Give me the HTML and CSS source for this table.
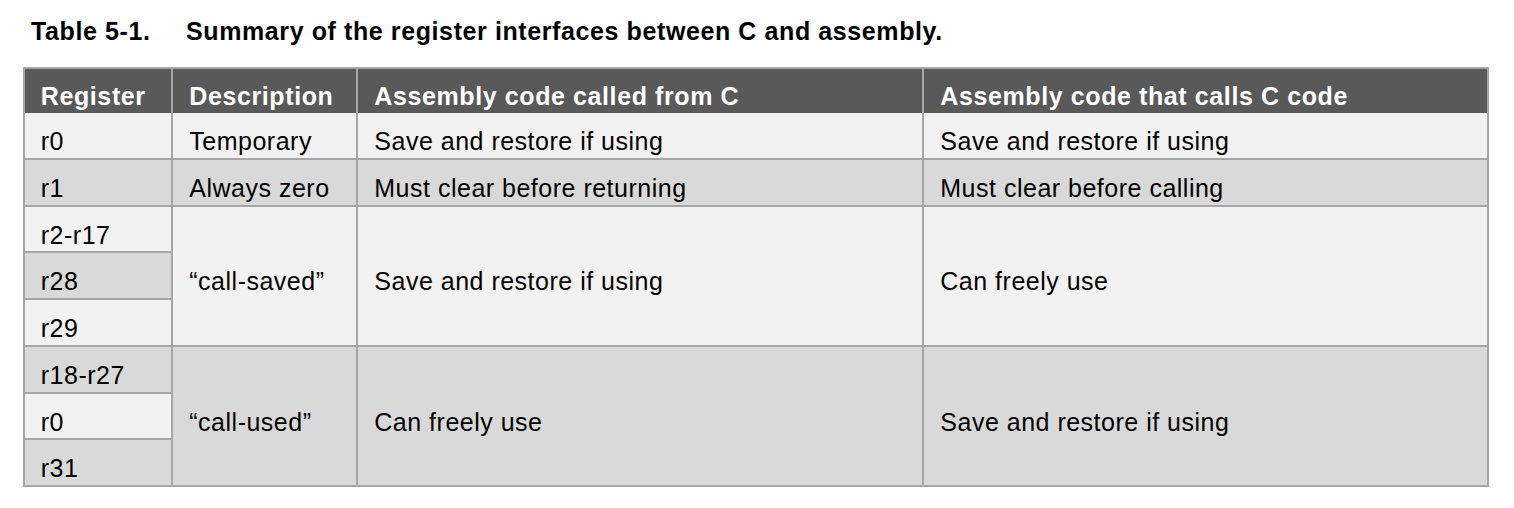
FILE: index.html
```html
<!DOCTYPE html>
<html lang="en">
<head>
<meta charset="utf-8">
<title>Table 5-1</title>
<link rel="stylesheet" href="styles.css">
</head>
<body>
<div class="page">
  <h1 class="caption"><span class="cap-num">Table 5-1.</span><span class="cap-text">Summary of the register interfaces between C and assembly.</span></h1>
  <div class="tbl" role="table">
    <div class="cell head">Register</div>
    <div class="cell head">Description</div>
    <div class="cell head">Assembly code called from C</div>
    <div class="cell head">Assembly code that calls C code</div>

    <div class="cell light">r0</div>
    <div class="cell light">Temporary</div>
    <div class="cell light">Save and restore if using</div>
    <div class="cell light">Save and restore if using</div>

    <div class="cell dark">r1</div>
    <div class="cell dark">Always zero</div>
    <div class="cell dark">Must clear before returning</div>
    <div class="cell dark">Must clear before calling</div>

    <div class="cell light c1 g1a">r2-r17</div>
    <div class="cell light span3 c2 g1">“call-saved”</div>
    <div class="cell light span3 c3 g1">Save and restore if using</div>
    <div class="cell light span3 c4 g1">Can freely use</div>
    <div class="cell dark c1 g1b">r28</div>
    <div class="cell light c1 g1c">r29</div>

    <div class="cell dark c1 g2a">r18-r27</div>
    <div class="cell dark span3 c2 g2">“call-used”</div>
    <div class="cell dark span3 c3 g2">Can freely use</div>
    <div class="cell dark span3 c4 g2">Save and restore if using</div>
    <div class="cell light c1 g2b">r0</div>
    <div class="cell dark c1 g2c">r31</div>
  </div>
</div>
</body>
</html>
```

FILE: styles.css
```css
html, body {
  margin: 0;
  padding: 0;
  background: #ffffff;
}

.page {
  font-family: "Liberation Sans", Arial, sans-serif;
  color: #000000;
  padding-top: 16.5px;
}

.caption {
  margin: 0 0 21.5px 31px;
  font-size: 25px;
  line-height: 29px;
  font-weight: bold;
  letter-spacing: 0.6px;
  white-space: nowrap;
}

.cap-num {
  display: inline-block;
  width: 155px;
}

.tbl {
  display: grid;
  grid-template-columns: 148.5px 185px 566px 565px;
  grid-template-rows: 44px repeat(8, 46.75px);
  width: max-content;
  margin-left: 22.5px;
  border-top: 2px solid #a6a6a6;
  border-left: 2px solid #a6a6a6;
}

.cell {
  box-sizing: border-box;
  display: flex;
  align-items: center;
  padding: 12.5px 8px 0 16.3px;
  font-size: 25px;
  line-height: 29px;
  letter-spacing: 0.5px;
  white-space: nowrap;
  border-right: 2px solid #a6a6a6;
  border-bottom: 2px solid #a6a6a6;
}

.head {
  background: #595959;
  color: #ffffff;
  font-weight: bold;
  letter-spacing: 0.6px;
  padding-top: 10px;
  border-bottom: 0;
}

.light { background: #f2f2f2; }
.dark { background: #d9d9d9; }

.c1 { grid-column: 1; }
.c2 { grid-column: 2; }
.c3 { grid-column: 3; }
.c4 { grid-column: 4; }

.span3.g1 { grid-row: 4 / span 3; }
.span3.g2 { grid-row: 7 / span 3; }

.g1a { grid-row: 4; }
.g1b { grid-row: 5; }
.g1c { grid-row: 6; }
.g2a { grid-row: 7; }
.g2b { grid-row: 8; }
.g2c { grid-row: 9; }
```
